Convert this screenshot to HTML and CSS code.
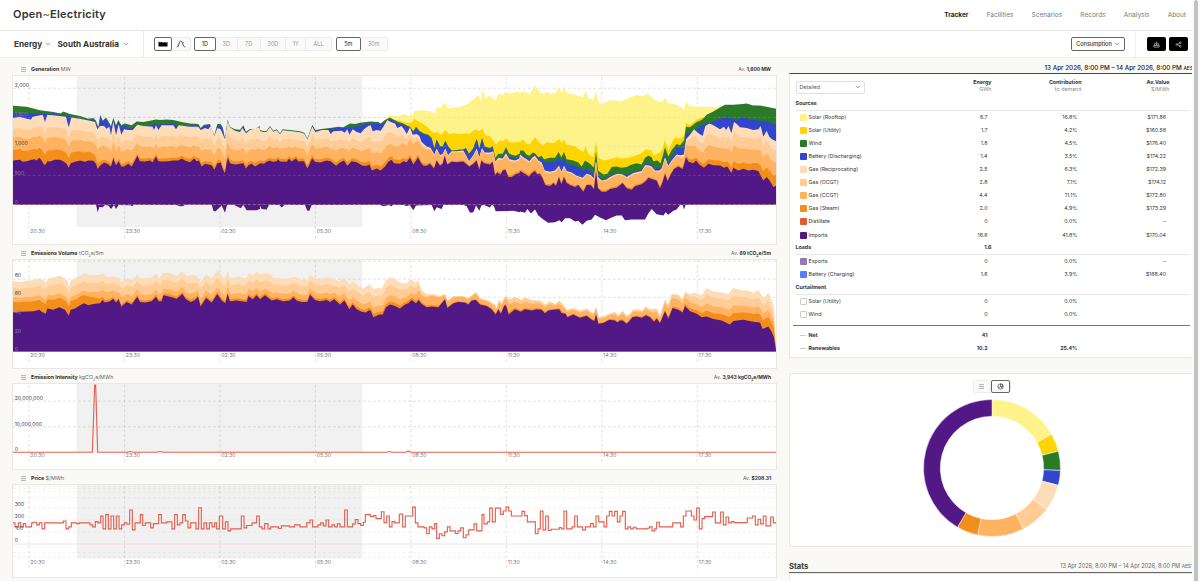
FILE: index.html
```html
<!DOCTYPE html>
<html lang="en">
<head>
    <meta charset="UTF-8">
    <meta name="viewport" content="width=device-width, initial-scale=1.0">
    <title>Open Electricity</title>
    <link rel="stylesheet" href="styles.css">
</head>
<body>
    <div class="page">
        <!-- Site header -->
        <header class="site-header">
            <a class="logo">Open<span>~</span>Electricity</a>
            <nav class="nav">
                <a class="active">Tracker</a>
                <a>Facilities</a>
                <a>Scenarios</a>
                <a>Records</a>
                <a>Analysis</a>
                <a>About</a>
            </nav>
        </header>

        <!-- Filters -->
        <div class="toolbar">
            <div class="pickers">
                <span class="picker-energy">Energy</span>
                <svg class="chev" viewBox="0 0 6 4"><path d="M1 .8l2 2 2-2"/></svg>
                <span class="picker-region">South Australia</span>
                <svg class="chev" viewBox="0 0 6 4"><path d="M1 .8l2 2 2-2"/></svg>
            </div>
            <div class="btn-group views">
                <button class="on"><svg viewBox="0 0 10 6"><path d="M.5.5l1.5 1 1.5-.8 1.5 1 1.5-.8 1.5.8 1.5-1v4.8h-9z"/></svg></button>
                <button><svg class="line" viewBox="0 0 10 8"><path d="M.8 7.2C3 7 3 1 4.8 1S7 7 9.2 7.2M1.5 5.2l1.3.3M7.6 2.2L6.4 3.4"/></svg></button>
            </div>
            <div class="btn-group ranges">
                <button class="on">1D</button><button>3D</button><button>7D</button><button>30D</button><button>1Y</button><button>ALL</button>
            </div>
            <div class="btn-group intervals">
                <button class="on">5m</button><button>30m</button>
            </div>
            <div class="toolbar-right">
                <button class="consumption">Consumption <svg class="chev" viewBox="0 0 6 4"><path d="M1 .8l2 2 2-2"/></svg></button>
                <div class="actions">
                    <button><svg viewBox="0 0 8 8"><path d="M4 .8v3.6M2.8 3.2L4 4.4l1.2-1.2M2.8 2L1 5.2h6L5.2 2M1 5.2V7h6V5.2"/></svg></button>
                    <button><svg viewBox="0 0 8 8"><path d="M5.5 2.2L2.5 4l3 1.8"/><circle cx="6" cy="1.9" r=".9"/><circle cx="2" cy="4" r=".9"/><circle cx="6" cy="6.1" r=".9"/></svg></button>
                </div>
            </div>
        </div>

        <main class="content">
            <!-- Charts -->
            <section class="charts">
                <div class="chart-head"><i class="menu"></i><span><b>Generation</b> MW</span><span class="avg">Av. <b>1,600 MW</b></span></div>
                <div class="chart-box box-generation"><svg id="generation" viewBox="39 45 2289 507" preserveAspectRatio="none"></svg></div>

                <div class="chart-head"><i class="menu"></i><span><b>Emissions Volume</b> tCO<sub>2</sub>e/5m</span><span class="avg">Av. <b>69 tCO<sub>2</sub>e/5m</b></span></div>
                <div class="chart-box box-emissions"><svg id="emissions" viewBox="39 57 2289 327" preserveAspectRatio="none"></svg></div>

                <div class="chart-head"><i class="menu"></i><span><b>Emission Intensity</b> kgCO<sub>2</sub>e/MWh</span><span class="avg">Av. <b>3,943 kgCO<sub>2</sub>e/MWh</b></span></div>
                <div class="chart-box box-intensity"><svg id="intensity" viewBox="39 54 2289 258" preserveAspectRatio="none"></svg></div>

                <div class="chart-head"><i class="menu"></i><span><b>Price</b> $/MWh</span><span class="avg">Av. <b>$208.31</b></span></div>
                <div class="chart-box box-price"><svg id="price" viewBox="39 357 2289 279" preserveAspectRatio="none"></svg></div>
            </section>

            <!-- Summary -->
            <section class="summary">
                <div class="date-range">13 Apr 2026, 8:00 PM – 14 Apr 2026, 8:00 PM <small>AEST</small></div>
                <div class="table">
                    <div class="row head">
                        <div class="select">Detailed <svg class="chev" viewBox="0 0 6 4"><path d="M1 .8l2 2 2-2"/></svg></div>
                        <div><b>Energy</b><br>GWh</div>
                        <div><b>Contribution</b><br>to demand</div>
                        <div><b>Av.Value</b><br>$/MWh</div>
                    </div>
                    <div class="row group"><b>Sources</b></div>
                    <div class="row"><span><i class="sw rooftop"></i>Solar (Rooftop)</span><span>6.7</span><span>16.8%</span><span>$171.86</span></div>
                    <div class="row"><span><i class="sw utility"></i>Solar (Utility)</span><span>1.7</span><span>4.2%</span><span>$160.56</span></div>
                    <div class="row"><span><i class="sw wind"></i>Wind</span><span>1.8</span><span>4.5%</span><span>$176.40</span></div>
                    <div class="row"><span><i class="sw battery"></i>Battery (Discharging)</span><span>1.4</span><span>3.5%</span><span>$174.22</span></div>
                    <div class="row"><span><i class="sw recip"></i>Gas (Reciprocating)</span><span>2.5</span><span>6.3%</span><span>$172.39</span></div>
                    <div class="row"><span><i class="sw ocgt"></i>Gas (OCGT)</span><span>2.8</span><span>7.1%</span><span>$174.12</span></div>
                    <div class="row"><span><i class="sw ccgt"></i>Gas (CCGT)</span><span>4.4</span><span>11.1%</span><span>$172.80</span></div>
                    <div class="row"><span><i class="sw steam"></i>Gas (Steam)</span><span>2.0</span><span>4.9%</span><span>$173.29</span></div>
                    <div class="row"><span><i class="sw distillate"></i>Distillate</span><span>0</span><span>0.0%</span><span>–</span></div>
                    <div class="row"><span><i class="sw imports"></i>Imports</span><span>16.6</span><span>41.8%</span><span>$170.04</span></div>
                    <div class="row group"><b>Loads</b><b>1.6</b></div>
                    <div class="row"><span><i class="sw exports"></i>Exports</span><span>0</span><span>0.0%</span><span>–</span></div>
                    <div class="row"><span><i class="sw charging"></i>Battery (Charging)</span><span>1.6</span><span>3.9%</span><span>$168.40</span></div>
                    <div class="row group"><b>Curtailment</b></div>
                    <div class="row"><span><i class="sw empty"></i>Solar (Utility)</span><span>0</span><span>0.0%</span><span></span></div>
                    <div class="row"><span><i class="sw empty"></i>Wind</span><span>0</span><span>0.0%</span><span></span></div>
                    <div class="totals">
                        <div class="row"><span><i class="dash"></i>Net</span><span>41</span><span></span><span></span></div>
                        <div class="row"><span><i class="dash"></i>Renewables</span><span>10.2</span><span>25.4%</span><span></span></div>
                    </div>
                </div>

                <div class="donut-card">
                    <div class="btn-group donut-toggle">
                        <button><i class="menu"></i></button>
                        <button class="on"><svg viewBox="0 0 8 8"><circle cx="4" cy="4" r="3"/><path d="M4 4V1a3 3 0 0 1 3 3zM4 4l2 2.3M4 4L1.5 5.5"/></svg></button>
                    </div>
                    <svg id="donut" viewBox="-69 -69 138 138"></svg>
                </div>

                <div class="stats-head"><b>Stats</b><span>13 Apr 2026, 8:00 PM – 14 Apr 2026, 8:00 PM <small>AEST</small></span></div>
                <div class="stats-box"></div>
            </section>
        </main>
    </div>
    <div class="scrollbar"></div>
    <script src="charts.js"></script>
</body>
</html>
```

FILE: styles.css
```css
* {
    margin: 0;
    padding: 0;
    box-sizing: border-box;
}

body {
    font-family: Inter, sans-serif;
    font-size: 5.3px;
    line-height: 7px;
    color: #353535;
    background: #faf9f6;
    height: 581px;
    display: flex;
    overflow: hidden;
}

button {
    font-family: inherit;
    background: none;
    border: none;
    display: flex;
    align-items: center;
    justify-content: center;
}

.page {
    width: 1192px;
    height: 581px;
    overflow: hidden;
}

.scrollbar {
    width: 4px;
    margin-left: 2px;
    height: 581px;
    background: #c1c1c1;
    border-radius: 2px 2px 0 0;
    box-shadow: 0 0 0 2px #fafafa;
}

/* Header */
.site-header {
    height: 31px;
    background: #fff;
    border-bottom: 1px solid #e8e8e8;
    padding: 0 6px 2px 13px;
    display: flex;
    align-items: center;
    justify-content: space-between;
}

.logo {
    font-size: 11px;
    font-weight: 600;
    line-height: 14px;
    letter-spacing: 0.22px;
}

.logo span {
    color: #7d8c3c;
}

.nav {
    display: flex;
    gap: 18.2px;
    font-size: 6.5px;
    color: #777;
    padding-top: 2px;
}

.nav .active {
    font-weight: 700;
    color: #222;
}

/* Toolbar */
.toolbar {
    height: 27px;
    background: #fff;
    border-bottom: 1px solid #eee;
    display: flex;
    align-items: center;
}

.pickers {
    width: 144px;
    height: 26px;
    padding-left: 14px;
    border-right: 1px solid #eaeaea;
    display: flex;
    align-items: center;
    font-size: 8.2px;
    font-weight: 700;
    line-height: 10px;
}

.picker-energy {
    width: 31px;
}

.picker-region {
    margin-left: 6.5px;
    width: 65.5px;
    white-space: nowrap;
}

.chev {
    width: 6px;
    height: 4px;
    fill: none;
    stroke: #666;
    stroke-width: 0.7;
}

.btn-group {
    display: flex;
    height: 14px;
    border: 1px solid #ececec;
    border-radius: 2px;
    background: #fafafa;
}

.btn-group button {
    height: 14px;
    margin-top: -1px;
    font-size: 5.5px;
    color: #999;
    border-right: 1px solid #ececec;
}

.btn-group button:last-child {
    border-right: none;
}

.btn-group .on,
.btn-group .on:last-child {
    background: #fff;
    color: #222;
    border: 1px solid #666;
    border-radius: 2px;
}

.views {
    margin-left: 10px;
    width: 37px;
}

.views button {
    width: 19px;
    margin-left: -1px;
}

.views button + button {
    margin-left: 0;
}

.views svg {
    width: 10px;
    height: 6px;
}

.views .line {
    height: 8px;
    fill: none;
    stroke: #333;
    stroke-width: 0.8;
}

.ranges {
    margin-left: 3px;
    width: 138px;
}

.ranges button:nth-child(1) { width: 22px; margin-left: -1px; }
.ranges button:nth-child(2) { width: 22px; }
.ranges button:nth-child(3) { width: 23px; }
.ranges button:nth-child(4) { width: 26px; }
.ranges button:nth-child(5) { width: 20px; }
.ranges button:nth-child(6) { width: 25px; }

.intervals {
    margin-left: 4px;
    width: 52px;
}

.intervals button {
    width: 27px;
}

.intervals .on {
    width: 25px;
    margin-left: -1px;
}

.toolbar-right {
    margin-left: auto;
    display: flex;
    align-items: center;
}

.consumption {
    width: 54px;
    height: 14px;
    margin-right: 10px;
    border: 1px solid #666;
    border-radius: 2px;
    font-size: 5.6px;
    font-weight: 500;
    color: #333;
    gap: 2px;
}

.actions {
    height: 26px;
    border-left: 1px solid #f0f0f0;
    padding: 0 4px 0 11px;
    display: flex;
    align-items: center;
    gap: 3px;
}

.actions button {
    width: 19px;
    height: 14px;
    background: #000;
    border-radius: 2px;
}

.actions svg {
    width: 7px;
    height: 7px;
    fill: none;
    stroke: #ddd;
    stroke-width: 0.7;
}

/* Columns */
.content {
    display: flex;
    gap: 12px;
    padding-left: 12px;
}

.charts {
    width: 765px;
    padding-top: 2px;
}

.chart-head {
    height: 15px;
    padding: 3px 6px 0 9px;
    display: flex;
    align-items: center;
    color: #666;
}

.chart-head b {
    color: #333;
    letter-spacing: -0.05px;
}

.chart-head sub {
    font-size: 3.5px;
    line-height: 0;
}

.chart-head .avg {
    margin-left: auto;
    font-size: 5px;
}

.menu {
    width: 5px;
    height: 5px;
    margin-right: 5px;
    background: repeating-linear-gradient(#bbb 0 1px, #eee 1px 2px);
}

.chart-box {
    background: #fff;
    border: 1px solid #e9e8e5;
}

.chart-box svg {
    display: block;
    width: 763px;
    height: 100%;
}

.box-generation { height: 170px; }
.box-emissions { height: 110px; }
.box-intensity { height: 87px; }
.box-price { height: 94px; }

.chart-box + .chart-head {
    height: 14px;
    padding-top: 2px;
}

/* Chart parts */
.grid {
    stroke: #bbb;
    stroke-opacity: 0.55;
    stroke-width: 2.5;
    stroke-dasharray: 8 7;
}

.grid.over {
    stroke-opacity: 0.25;
}

.night {
    fill: #f1f1f1;
}

.axis-x,
.axis-y {
    font-size: 15.5px;
    fill: #777;
}

.axis-y {
    fill: #444;
}

.axis-y.faint {
    fill: #8b7c8e;
}

.line-series {
    fill: none;
    stroke: #e2604d;
    stroke-width: 3.4;
}

/* Summary table */
.summary {
    width: 405px;
    flex-shrink: 0;
}

.date-range {
    height: 15px;
    padding-top: 7px;
    margin-left: 255.5px;
    font-size: 6.3px;
    font-weight: 500;
    white-space: nowrap;
    color: #222;
}

.date-range small,
.stats-head small {
    font-size: 4.8px;
}

.table {
    height: 285px;
    background: #fff;
    border: 1px solid #e9e8e5;
    border-top: 1px solid #444;
}

.row {
    height: 13.1px;
    padding-left: 9.5px;
    display: grid;
    grid-template-columns: 120px 68px 90px 88.5px;
    align-items: center;
}

.row > *:not(:first-child) {
    text-align: right;
}

.row span:first-child {
    display: flex;
    align-items: center;
    white-space: nowrap;
}

.row.head {
    height: 23.3px;
    padding: 3px 0 0 5.5px;
    grid-template-columns: 128px 68px 90px 88px;
    color: #888;
}

.head > div:not(.select) {
    padding-bottom: 2px;
}

.head b {
    color: #333;
}

.select {
    width: 69px;
    height: 13px;
    padding: 0 3px;
    border: 1px solid #e0e0e0;
    border-radius: 2px;
    display: flex;
    align-items: center;
    justify-content: space-between;
    color: #555;
}

.row.group {
    height: 13.4px;
    margin: 0 3px 0 5.5px;
    padding-left: 0;
    border-bottom: 1px solid #e8e8e8;
    grid-template-columns: 128px 68px;
}

.sw {
    width: 7px;
    height: 7px;
    border-radius: 1px;
    margin-right: 2px;
}

.rooftop { background: #fef38a; }
.utility { background: #fed500; }
.wind { background: #2a7a28; }
.battery { background: #3145ce; }
.recip { background: #fddcb8; }
.ocgt { background: #ffcc96; }
.ccgt { background: #ffb25f; }
.steam { background: #f48e1b; }
.distillate { background: #e15c34; }
.imports { background: #521986; }
.exports { background: #927bad; }
.charging { background: #577cff; }
.empty { border: 1px solid #ccc; background: #fff; }

.dash {
    width: 6px;
    height: 1px;
    margin-right: 3px;
    background: #ccc;
}

.totals {
    margin: 3.8px 3px 0 3px;
    padding-top: 3.5px;
    border-top: 1px solid #777;
    font-weight: 700;
}

.totals .row {
    padding-left: 6.5px;
}

/* Donut */
.donut-card {
    height: 174px;
    margin-top: 15px;
    background: #fff;
    border: 1px solid #e9e8e5;
    display: flex;
    flex-direction: column;
    align-items: center;
}

.donut-toggle {
    width: 38px;
    height: 13px;
    margin-top: 6px;
}

.donut-toggle button {
    width: 19px;
    height: 13px;
}

.donut-toggle .menu {
    margin: 0;
}

.donut-toggle svg {
    width: 7px;
    height: 7px;
    fill: none;
    stroke: #444;
    stroke-width: 0.8;
}

#donut {
    width: 138px;
    height: 138px;
    margin-top: 6px;
}

/* Stats */
.stats-head {
    height: 26px;
    padding-top: 16px;
    border-bottom: 1px solid #666;
    display: flex;
    white-space: nowrap;
    color: #666;
}

.stats-head b {
    width: 276px;
    font-size: 7.6px;
    color: #333;
}

.stats-head span {
    font-size: 5.55px;
}

.stats-box {
    height: 20px;
    background: #fff;
    border: 1px solid #e9e8e5;
}
```

FILE: charts.js
```javascript
const NS = 'http://www.w3.org/2000/svg';
const COLORS = {
    rooftop: '#fef38a', utility: '#fed500', wind: '#2a7a28', battery: '#3145ce',
    recip: '#fddcb8', ocgt: '#ffcc96', ccgt: '#ffb25f', steam: '#f48e1b', imports: '#521986'
};
const TIMES = ['20:30', '23:30', '02:30', '05:30', '08:30', '11:30', '14:30', '17:30'];

function add(svg, tag, attrs, text) {
    const el = document.createElementNS(NS, tag);
    for (const key in attrs) el.setAttribute(key, attrs[key]);
    if (text) el.textContent = text;
    svg.appendChild(el);
}

// "x,y x,y ..." with an x offset
function pts(str, dx) {
    return str.trim().split(/\s+/).map(p => {
        const [x, y] = p.split(',').map(Number);
        return [x + (dx || 0), y];
    });
}

function at(points, x) {
    if (x <= points[0][0]) return points[0][1];
    for (let i = 1; i < points.length; i++) {
        if (x <= points[i][0]) {
            const [x0, y0] = points[i - 1];
            const [x1, y1] = points[i];
            return y0 + (y1 - y0) * (x - x0) / (x1 - x0 || 1);
        }
    }
    return points[points.length - 1][1];
}

function area(svg, points, base, fill) {
    const first = points[0][0];
    const last = points[points.length - 1][0];
    add(svg, 'path', { d: `M${first},${base}L${points.join('L')}L${last},${base}Z`, fill });
}

// gas layers sit between imports and the top of the gas stack
function between(low, high, shares) {
    const out = [];
    for (let x = 39; x <= 2328; x += 3) {
        const a = at(low, x);
        out.push([x, a + (Math.min(a, at(high, x)) - a) * at(shares, x)]);
    }
    return out;
}

function night(svg, y, h) {
    add(svg, 'rect', { x: 230, y, width: 857, height: h, class: 'night' });
}

function rowLines(svg, rows, cls) {
    rows.forEach(y => add(svg, 'line', { x1: 39, x2: 2328, y1: y, y2: y, class: cls || 'grid' }));
}

function timeLines(svg, top, bottom) {
    TIMES.forEach((t, i) => {
        const x = 87 + i * 286.4;
        add(svg, 'line', { x1: x, x2: x, y1: top, y2: bottom, class: 'grid' });
    });
}

function timeLabels(svg, y) {
    TIMES.forEach((t, i) => add(svg, 'text', { x: 91 + i * 286.4, y, class: 'axis-x' }, t));
}

function yLabels(svg, labels) {
    labels.forEach(([t, y, faint]) => add(svg, 'text', { x: 44, y, class: faint ? 'axis-y faint' : 'axis-y' }, t));
}

/* Generation */
const genImports = [
    ...pts('39,300 60,298 68,304 80,302 95,298 105,296 110,300 118,292 125,300 132,312 137,312 142,302 150,303 165,298 180,298 192,304 200,310 206,322 212,308 225,304 240,300 255,304 265,300 280,301 288,310 293,326 300,316 312,306 322,310 333,318 340,294 348,314 356,302 364,318 372,318 385,310 395,318 405,300 412,286 420,302 435,303 450,300 458,305 468,288 475,302 490,303 505,302 520,300 535,300 545,294 555,300 570,305 582,294 590,302 597,300 605,318 615,310 625,312 635,314 643,328 652,308 662,306 670,330 675,338 680,305 684,292 690,308 705,312 720,310 730,308 738,324 745,314 755,310 765,318 779,310'),
    ...pts('0,308 12,310 20,304 30,300 38,304 50,302 54,296 60,303 80,304 87,295 95,303 108,294 115,303 125,302 132,302 142,324 148,312 156,293 165,304 180,306 200,300 212,302 228,316 240,306 252,300 262,316 275,302 290,305 308,316 320,316 328,312 336,330 350,324 362,330 375,318 385,304 395,298 402,308 420,310 430,302 440,305 450,292 460,312 468,300 474,290 482,306 490,316 500,316 510,310 522,324 530,300 540,316 548,310 554,286 562,312 575,304 590,305 610,303 628,318 640,310 650,300 658,328 664,300 672,308 690,312 698,304 705,344 712,336 722,342 728,330 736,328 745,350 755,350 765,342 779,338', 780),
    ...pts('0,332 8,336 18,342 26,348 38,336 45,332 52,342 60,340 68,354 76,374 84,376 92,376 100,368 108,376 117,350 124,372 132,350 140,368 150,374 165,380 175,374 190,394 200,374 212,374 222,386 228,332 234,384 245,394 258,394 270,386 290,382 308,368 320,384 335,388 345,378 365,372 378,362 385,352 395,356 410,360 420,384 428,364 435,340 443,362 452,342 462,326 475,318 488,326 498,290 506,304 520,308 528,300 538,312 552,322 565,310 580,314 600,315 612,322 622,318 634,338 640,322 655,330 670,325 685,330 700,328 715,332 722,345 730,360 740,350 750,362 760,380 768,376', 1560)
];
const genGas = [
    ...pts('39,172 60,168 80,174 93,176 98,168 128,162 135,184 142,162 165,164 198,168 206,200 214,170 240,174 270,180 285,184 292,206 300,196 312,196 320,204 328,198 333,224 340,182 348,224 356,190 364,222 372,206 385,208 398,208 412,192 430,196 458,198 462,208 468,194 475,208 485,194 520,194 528,206 536,194 570,198 595,198 602,208 615,202 625,206 632,196 643,226 652,202 662,206 675,236 683,180 690,200 705,210 720,214 727,202 738,218 750,208 779,200'),
    ...pts('0,211 12,215 20,213 30,199 40,213 50,209 60,221 68,209 90,211 120,215 133,219 142,237 150,215 157,198 166,214 175,212 185,208 205,208 212,220 220,212 245,210 254,216 262,206 268,222 278,206 290,214 302,218 312,206 325,196 332,194 338,212 350,208 362,210 370,198 382,178 392,184 405,188 412,202 424,196 432,206 440,220 450,200 458,222 470,220 478,226 485,244 500,258 512,262 523,282 530,264 540,284 548,280 556,264 564,284 575,272 590,272 610,270 618,284 627,302 640,284 650,264 658,290 666,262 674,276 690,276 700,272 706,304 715,292 728,294 738,278 748,296 765,300 779,294', 780),
    ...pts('0,282 10,290 20,296 28,302 38,290 45,286 55,300 65,306 74,330 90,334 105,330 117,316 124,334 132,316 140,332 155,336 170,346 188,352 200,340 212,344 222,354 228,300 234,350 245,360 258,358 270,350 285,342 295,340 308,342 320,350 340,338 365,332 375,314 385,314 395,318 405,330 418,330 425,324 435,290 445,316 455,300 470,282 480,284 492,282 498,236 510,222 522,206 535,218 548,226 556,196 568,188 580,194 600,206 612,198 618,208 626,196 634,218 642,184 650,190 660,200 680,202 700,208 715,206 722,196 730,228 740,210 748,228 756,236 768,242', 1560)
];
const genBattery = [
    ...pts('39,157 80,158 100,160 130,158 160,160 180,162 200,166 230,170 255,176 280,178 288,186 295,206 301,166 308,184 318,174 326,188 333,200 340,178 348,200 355,184 364,198 375,194 385,203 398,202 412,192 430,196 450,196 460,190 475,192 500,190 520,188 530,194 560,196 580,196 595,194 602,206 612,196 630,194 636,211 643,228 652,194 662,194 668,203 675,238 683,180 690,200 705,210 720,211 730,198 738,217 750,209 768,209 779,199'),
    ...pts('0,211 12,215 20,213 30,199 40,213 50,209 60,221 68,209 90,211 120,215 133,219 142,237 150,215 157,196 166,211 185,208 215,204 235,202 260,202 272,198 285,198 300,194 320,190 350,188 362,192 375,184 388,176 400,180 415,188 430,192 442,198 450,201 460,215 468,201 478,213 490,221 505,225 515,235 523,265 530,239 540,259 548,261 556,243 564,259 575,272 590,271 610,269 618,265 627,283 640,265 650,237 658,267 666,235 674,261 690,268 698,262 706,302 715,292 728,288 738,272 748,288 765,294 779,290', 780),
    ...pts('0,280 10,284 20,290 28,296 38,286 45,282 55,292 65,296 76,306 95,306 108,302 117,290 124,306 132,292 140,308 160,314 180,322 188,332 200,322 215,338 222,344 228,290 234,344 245,356 258,356 270,344 280,342 295,338 305,340 320,344 340,334 365,328 375,310 385,308 395,312 405,326 415,322 425,322 435,282 445,308 455,290 470,262 480,262 492,262 498,218 510,216 530,204 550,190 565,188 590,178 610,172 630,172 650,176 670,170 685,174 700,178 720,180 745,182 755,188 768,192', 1560)
];
const genWind = [
    ...pts('39,135 80,138 120,148 160,154 182,158 190,152 200,156 210,160 240,166 265,174 280,172 288,180 295,200 301,162 308,180 318,170 326,184 333,196 340,172 348,194 355,178 364,194 375,188 395,194 410,182 430,184 450,180 468,176 480,178 500,176 520,178 545,184 570,188 595,190 602,202 612,192 630,190 636,208 643,224 652,190 662,190 668,200 675,234 683,176 690,198 705,206 720,207 730,194 738,213 750,205 768,205 779,195'),
    ...pts('0,208 12,212 20,210 30,196 40,210 50,206 60,218 68,206 90,208 120,212 133,216 142,234 150,212 157,193 166,208 185,205 215,201 235,198 250,200 270,188 285,190 300,186 330,182 355,184 362,188 375,178 390,170 400,176 415,184 430,188 442,195 450,198 460,212 468,198 478,210 490,218 505,222 515,232 523,262 530,236 540,256 548,258 556,240 564,256 575,270 590,268 610,266 618,262 627,280 640,262 650,234 658,264 666,232 674,258 690,262 698,256 706,292 715,280 728,280 738,260 748,280 765,286 779,280', 780),
    ...pts('0,270 10,270 20,282 28,286 38,276 45,278 55,290 65,286 72,296 90,292 105,292 116,274 124,290 132,274 140,296 160,300 175,306 185,318 195,300 210,310 222,322 228,272 234,330 250,342 262,340 275,320 290,318 305,322 320,320 335,312 350,308 365,312 375,292 385,286 395,290 400,302 412,300 422,308 435,260 445,288 455,268 470,250 480,254 492,240 498,198 510,200 530,184 545,178 560,162 580,152 600,140 615,132 640,132 660,130 680,128 700,134 720,134 740,138 768,144', 1560)
];
const genUtility = [
    ...pts('388,172 405,178 420,180 440,186 455,186 463,174 475,182 490,190 505,202 520,218 530,214 545,222 555,208 568,220 580,218 600,220 618,218 628,220 645,206 655,212 668,204 676,224 690,226 700,238 708,252 718,240 730,242 738,232 750,246 779,244', 780),
    ...pts('0,244 10,236 20,250 28,252 45,230 60,248 70,254 80,244 95,248 105,246 117,236 124,246 132,238 140,252 165,258 180,268 190,274 197,256 205,280 220,290 228,244 236,292 250,300 270,296 290,290 305,294 325,292 345,286 362,280 378,266 395,270 400,284 420,276 428,262 435,238 445,268 455,248 465,230 480,234 492,226 498,186 510,194 528,178 545,170 555,170 570,160 590,150', 1560)
];
const genRooftop = [
    ...pts('368,184 378,172 388,162 400,166 420,166 430,160 445,164 455,164 462,152 470,150 490,148 515,152 525,160 530,138 540,142 548,134 555,126 565,142 580,140 600,138 620,130 640,116 655,102 662,120 668,84 675,112 690,104 700,114 707,120 716,98 728,104 738,92 748,98 765,94 779,92', 780),
    ...pts('0,94 15,92 28,100 45,74 62,96 70,98 82,94 95,98 105,98 117,78 124,96 132,78 140,96 155,98 170,104 180,104 188,110 197,90 205,110 220,118 228,90 236,124 245,130 265,120 285,118 300,122 320,114 350,102 365,106 385,98 395,110 410,120 425,124 435,110 445,128 465,130 485,140 492,148 498,122 510,136 530,138 550,138 580,138 610,136 620,134', 1560)
];
const genLoads = [
    ...pts('39,433 288,433 293,456 298,440 308,441 315,434 325,436 333,446 342,434 348,446 356,434 392,435 397,438 402,433 530,434 540,438 550,437 556,433 635,433 640,452 646,454 665,436 675,458 681,434 700,433 722,444 730,434 740,450 770,450 780,446'),
    ...pts('0,436 5,446 20,448 26,436 30,433 58,434 65,442 75,433 135,434 142,452 148,452 155,434 355,433 372,438 385,434 395,438 400,433 430,434 440,437 450,435 460,450 468,436 515,434 523,453 530,441 545,446 550,434 598,433 610,434 620,438 630,458 640,456 648,436 658,452 664,436 672,434 690,442 696,433 702,438 707,453 760,452 779,456', 780),
    ...pts('0,454 15,458 22,446 33,460 45,448 55,466 70,478 84,488 105,486 118,480 125,486 135,474 150,474 165,484 175,482 187,494 200,482 215,478 225,464 240,472 258,480 275,472 290,466 305,466 315,480 335,478 365,478 375,478 385,460 395,446 410,462 430,466 437,456 445,464 460,452 470,448 480,434 488,434 492,448 497,433 768,433', 1560)
];

const gen = document.getElementById('generation');
night(gen, 45, 456);
rowLines(gen, [82, 170]);
timeLines(gen, 48, 537);
area(gen, genRooftop, 433, COLORS.rooftop);
area(gen, genUtility, 433, COLORS.utility);
area(gen, genWind, 433, COLORS.wind);
area(gen, genBattery, 433, COLORS.battery);
area(gen, genGas, 433, COLORS.recip);
area(gen, between(genImports, genGas, pts('39,.75 400,.7 900,.72 1180,.72 1290,.93 2040,.95 2100,.74 2328,.8')), 433, COLORS.ocgt);
area(gen, between(genImports, genGas, pts('39,.54 280,.48 450,.4 900,.45 1180,.42 1290,.88 2030,.88 2090,.45 2328,.53')), 433, COLORS.ccgt);
area(gen, between(genImports, genGas, pts('39,.25 270,.22 310,.08 1200,.1 2100,.11 2250,.16 2328,.25')), 433, COLORS.steam);
area(gen, genImports, 433, COLORS.imports);
area(gen, genLoads, 432, COLORS.imports);
rowLines(gen, [170, 258, 345], 'grid over');
rowLines(gen, [433]);
timeLabels(gen, 519);
yLabels(gen, [['2,000', 79], ['1,500', 167, 1], ['1,000', 253], ['500', 343, 1], ['0', 431, 1]]);

/* Emissions volume */
const emImports = [
    ...pts('39,216 60,214 80,213 100,212 118,208 125,214 137,220 142,204 160,208 178,200 195,208 206,226 212,208 225,204 240,194 252,188 265,194 280,190 300,188 308,178 315,186 330,182 340,174 348,186 356,176 364,198 380,184 395,192 412,168 420,184 435,186 455,182 468,168 476,182 485,182 490,164 510,168 530,174 547,160 558,176 572,184 585,178 594,168 602,198 618,172 635,186 652,160 665,180 676,188 683,160 690,182 710,180 740,184 745,166 758,176 770,164 780,176 795,164 815,180 830,176 850,182 870,180 880,170 890,180 905,184 922,184 930,162 945,178 960,182 980,178 990,184 1003,176 1020,192 1033,180 1048,206 1058,192 1070,206 1085,214 1098,216 1105,210 1112,210 1120,230 1130,226 1138,222 1148,222 1158,200 1170,192 1185,196'),
    ...pts('0,204 15,192 25,188 35,178 48,188 56,178 65,190 80,200 95,198 115,200 135,176 142,202 160,188 175,184 195,186 205,192 215,180 228,178 240,192 260,196 275,206 287,222 295,206 303,220 312,196 318,194 326,222 345,206 362,214 375,206 395,210 410,206 425,208 435,218 445,210 460,208 478,206 485,218 497,220 502,230 520,222 540,232 560,226 575,238 583,242 588,222 595,250 610,248 628,238 645,240 652,246 660,240 668,240 680,250 688,242 697,230 710,228 725,232 738,224 750,230 762,244 770,234 780,248 795,212 805,234 818,202 835,208 848,216 855,196 870,212 890,220 905,230 920,228 940,236 965,240 990,252 1000,242 1030,238 1060,244 1080,246 1088,266 1105,258 1115,274 1122,292 1128,330', 1200)
];
const emTotal = [
    ...pts('39,120 60,124 80,120 100,118 120,112 137,124 145,112 160,110 178,104 195,112 203,120 206,140 212,118 225,112 240,104 255,98 270,104 300,102 308,98 318,108 340,106 355,112 364,122 385,112 400,118 412,98 420,112 440,112 455,110 468,98 478,112 488,96 510,96 530,106 547,90 560,106 575,102 590,104 602,124 618,100 635,112 652,90 662,100 675,116 683,88 690,112 715,108 740,112 746,96 758,104 770,94 785,102 795,98 812,100 820,112 840,112 860,114 885,108 900,116 922,118 930,102 945,112 965,114 985,110 1005,116 1018,122 1033,112 1048,132 1060,122 1075,134 1090,144 1100,136 1110,132 1120,146 1135,140 1145,144 1158,118 1170,110 1185,114'),
    ...pts('0,126 20,128 32,114 45,124 56,120 65,148 80,160 100,160 120,166 135,160 142,180 160,166 190,166 205,172 228,154 240,172 265,180 285,192 290,206 296,178 305,186 318,164 328,176 345,168 365,178 375,170 395,178 420,180 435,192 450,182 465,190 478,180 490,192 500,208 520,202 540,210 560,204 580,218 588,198 596,230 615,226 630,218 645,214 655,224 668,210 680,226 690,220 698,208 712,206 725,210 738,198 750,206 770,204 780,226 795,176 805,194 815,160 835,162 848,174 855,152 870,160 885,156 905,164 920,142 940,152 970,156 985,160 1000,142 1020,148 1045,150 1060,156 1075,148 1090,172 1105,156 1118,186 1122,200 1128,330', 1200)
];

const em = document.getElementById('emissions');
night(em, 57, 276);
rowLines(em, [60, 115, 170]);
timeLines(em, 57, 370);
area(em, emTotal, 334, COLORS.recip);
area(em, between(emImports, emTotal, pts('39,.78 500,.68 1250,.72 1300,.94 2030,.95 2100,.78 2328,.75')), 334, COLORS.ocgt);
area(em, between(emImports, emTotal, pts('39,.48 280,.42 450,.3 1240,.35 1290,.85 1500,.8 1540,.6 1700,.7 2030,.7 2090,.45 2328,.5')), 334, COLORS.ccgt);
area(em, between(emImports, emTotal, pts('39,.33 270,.28 320,.08 1000,.1 1250,.12 2030,.12 2120,.2 2328,.3')), 334, COLORS.steam);
area(em, emImports, 334, COLORS.imports);
timeLabels(em, 350);
yLabels(em, [['80', 109], ['60', 164], ['40', 221, 1], ['20', 277, 1], ['0', 332, 1]]);

/* Emission intensity */
const inten = document.getElementById('intensity');
night(inten, 54, 207);
rowLines(inten, [106, 184]);
timeLines(inten, 57, 295);
add(inten, 'path', { d: 'M39,261H277L284,57H287L293,261H380L390,259L400,261H470L480,259L490,261H1160L1168,259L1176,261H1218L1224,257L1232,261H2328', class: 'line-series' });
timeLabels(inten, 277);
yLabels(inten, [['20,000,000', 102], ['10,000,000', 180], ['0', 258]]);

/* Price */
const priceSteps = [
    ...pts('39,472 45,484 55,472 62,484 70,474 77,484 95,472 100,470 110,478 118,472 126,490 134,472 190,466 198,490 206,484 214,472 230,474 238,472 270,478 278,484 286,468 294,472 302,451 309,490 317,447 325,490 333,451 341,490 349,451 357,490 365,478 373,472 381,476 389,433 397,493 405,472 421,447 428,480 436,472 452,487 460,474 476,447 484,472 500,469 516,490 524,447 532,478 540,472 548,447 556,466 564,487 572,472 588,490 596,426 604,490 612,472 620,490 628,472 636,484 644,472 650,490 658,451 668,490 676,469 684,496 692,490 724,451 732,487 740,480 756,472 770,451 778,484 786,490 794,474 804,490 812,484 836,489 844,481 868,484 884,478 900,484 920,472 930,463 938,484 954,478 962,472 970,481 978,463 986,484 996,478 1004,484 1012,475 1020,484 1034,433 1042,484 1058,475 1066,462 1074,474 1082,480 1090,470 1096,447 1112,453 1120,450 1128,459 1144,438 1152,471 1160,451 1168,484 1176,468 1184,472 1198,447'),
    ...pts('0,445 8,484 16,451 38,424 46,472 54,484 72,487 80,505 88,484 96,490 104,474 110,519 118,505 126,511 134,499 142,484 150,496 166,504 174,496 182,487 190,517 198,508 206,493 222,475 230,496 246,447 252,475 262,469 269,427 277,469 286,427 302,446 310,436 318,424 326,436 334,451 366,437 374,450 382,469 406,505 414,490 421,436 429,493 437,451 445,495 453,491 478,486 484,490 492,436 500,490 516,484 524,451 532,484 548,493 556,484 572,474 580,484 588,451 596,469 612,484 620,451 628,437 636,451 644,437 652,469 660,451 668,437 676,490 684,484 692,490 700,485 708,490 740,488 748,484 756,496 764,490 770,470 778,484 818,472 842,484 850,451 858,436 874,451 882,463 890,427 898,490 906,459 914,453 938,439 946,472 962,439 970,478 978,454 986,472 994,468 1002,471 1042,457 1058,451 1066,478 1074,461 1082,475 1090,451 1098,481 1112,454 1120,472 1128,472', 1200)
];

const price = document.getElementById('price');
night(price, 357, 223);
rowLines(price, [362, 368, 378, 396, 427, 463, 499, 562, 575], 'grid over');
timeLines(price, 360, 617);
add(price, 'line', { x1: 39, x2: 2328, y1: 536, y2: 536, stroke: '#f0dcd8', 'stroke-width': 2.5 });
add(price, 'path', { d: 'M39,472' + priceSteps.map(p => `H${p[0]}V${p[1]}`).join(''), class: 'line-series' });
timeLabels(price, 598);
yLabels(price, [['300', 421], ['200', 457], ['100', 494], ['0', 530]]);

/* Donut */
const shares = { rooftop: 6.7, utility: 1.7, wind: 1.8, battery: 1.4, recip: 2.5, ocgt: 2.8, ccgt: 4.4, steam: 2, imports: 16.6 };
const total = Object.values(shares).reduce((a, b) => a + b, 0);
const donut = document.getElementById('donut');
const R = 68.5;
const r = 51.7;
let angle = 0;
for (const key in shares) {
    const end = angle + shares[key] / total * Math.PI * 2;
    const p = (rad, a) => `${rad * Math.sin(a)},${-rad * Math.cos(a)}`;
    add(donut, 'path', {
        d: `M${p(R, angle)}A${R},${R} 0 0 1 ${p(R, end)}L${p(r, end)}A${r},${r} 0 0 0 ${p(r, angle)}Z`,
        fill: COLORS[key], stroke: '#fff', 'stroke-width': 0.5
    });
    angle = end;
}
```
